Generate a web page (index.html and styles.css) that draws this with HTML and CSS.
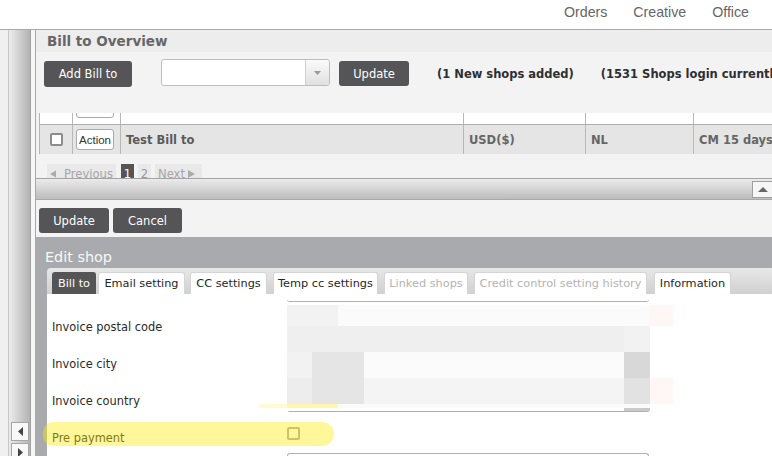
FILE: index.html
```html
<!DOCTYPE html>
<html>
<head>
<meta charset="utf-8">
<title>Bill to Overview</title>
<link rel="stylesheet" href="styles.css">
</head>
<body>
<header class="topbar">
  <nav class="topnav"><span>Orders</span><span>Creative</span><span>Office</span></nav>
</header>
<div class="layout">
  <aside class="rail">
    <div class="rail-edge"></div>
    <div class="rail-bar">
      <button class="rbtn"><svg width="5" height="9" viewBox="0 0 5 9"><polygon points="5,0 5,9 0,4.5" fill="#444"/></svg></button>
      <button class="rbtn"><svg width="5" height="9" viewBox="0 0 5 9"><polygon points="0,0 5,4.5 0,9" fill="#444"/></svg></button>
    </div>
    <div class="rail-gap"></div>
  </aside>
  <main class="panel">
    <div class="ov-title">Bill to Overview</div>
    <div class="toolbar">
      <button class="btn-dark btn-add">Add Bill to</button>
      <div class="select"><span class="select-arrow"><svg width="7" height="4" viewBox="0 0 7 4"><polygon points="0,0 7,0 3.5,4" fill="#9a9a9a"/></svg></span></div>
      <button class="btn-dark btn-upd">Update</button>
      <span class="stat">(1 New shops added)</span>
      <span class="stat stat2">(1531 Shops login currently)</span>
    </div>
    <div class="grid-clip">
      <div class="grid">
        <div class="row">
          <div class="cell c1 top1"><span class="chk"></span></div>
          <div class="cell c2 top2"><button class="action">Action</button></div>
          <div class="cell c3 top"></div>
          <div class="cell c4 top">USD($)</div>
          <div class="cell c5 top"></div>
          <div class="cell c6 top"></div>
        </div>
        <div class="row alt">
          <div class="cell c1"><span class="chk"></span></div>
          <div class="cell c2"><button class="action">Action</button></div>
          <div class="cell c3">Test Bill to</div>
          <div class="cell c4">USD($)</div>
          <div class="cell c5">NL</div>
          <div class="cell c6">CM 15 days</div>
        </div>
      </div>
    </div>
    <div class="pager">
      <span class="pg pg-prev"><svg width="7" height="8" viewBox="0 0 7 8"><polygon points="7,0 7,8 0,4" fill="#ababab"/></svg><span>Previous</span></span>
      <span class="pg cur">1</span>
      <span class="pg num">2</span>
      <span class="pg pg-next"><span>Next</span><svg width="7" height="8" viewBox="0 0 7 8"><polygon points="0,0 7,4 0,8" fill="#ababab"/></svg></span>
    </div>
    <div class="hbar"><button class="hbar-up"><svg width="10" height="5" viewBox="0 0 10 5"><polygon points="0,5 10,5 5,0" fill="#666"/></svg></button></div>
    <div class="actions">
      <button class="btn-dark btn-u2">Update</button>
      <button class="btn-dark btn-c2">Cancel</button>
    </div>
    <section class="edit">
      <h2 class="edit-title">Edit shop</h2>
      <div class="tabs">
        <span class="tab on t1">Bill to</span>
        <span class="tab t2">Email setting</span>
        <span class="tab t3">CC settings</span>
        <span class="tab t4">Temp cc settings</span>
        <span class="tab off t5">Linked shops</span>
        <span class="tab off t6">Credit control setting history</span>
        <span class="tab t7">Information</span>
      </div>
      <div class="form">
        <div class="labels">
          <div class="lbl">Invoice postal code</div>
          <div class="lbl">Invoice city</div>
          <div class="lbl">Invoice country</div>
          <div class="lbl">Pre payment</div>
        </div>
        <div class="fields">
          <div class="field-end"></div>
          <div class="mosaic">
            <i class="g0"></i><i class="g0"></i><i class="g0"></i><i class="g0"></i><i class="g0"></i>
            <i class="g2"></i><i class="g2"></i><i class="g1"></i><i class="g1"></i><i class="g1"></i>
            <i class="g3"></i><i class="g3"></i><i class="g3"></i><i class="g3"></i><i class="g2"></i>
            <i class="g2"></i><i class="g4"></i><i class="g4"></i><i class="g1"></i><i class="g5"></i>
            <i class="g6"></i><i class="g4"></i><i class="g4"></i><i class="g7"></i><i class="g8"></i>
            <i class="gy"></i><i class="gy"></i><i class="g1"></i><i class="g1"></i><i class="g1"></i>
            <i class="g0"></i><i class="g0"></i><i class="g0"></i><i class="g0"></i><i class="g9"></i>
          </div>
          <div class="chk chk-pre"></div>
          <div class="field-start"></div>
        </div>
        <div class="tint">
          <i class="p0"></i><i class="p1"></i><i class="p0"></i><i class="p1"></i>
        </div>
      </div>
      <div class="hl-streak"></div>
      <div class="hl"></div>
    </section>
  </main>
</div>
</body>
</html>
```
FILE: styles.css
```css
* { box-sizing: border-box; }
html, body { margin: 0; padding: 0; }
body {
  width: 772px;
  height: 456px;
  overflow: hidden;
  background: #fff;
  font-family: "DejaVu Sans", Verdana, sans-serif;
  font-size: 11.5px;
  color: #333;
}
button { font-family: inherit; margin: 0; cursor: default; }

/* top bar */
.topbar {
  height: 30px;
  border-bottom: 1px solid #a9a9a9;
  display: flex;
  justify-content: flex-end;
  padding: 4px 23px 0 0;
}
.topnav {
  display: flex;
  gap: 26px;
  font-family: "Liberation Sans", Arial, sans-serif;
  font-size: 14.2px;
  line-height: 16px;
  color: #666;
}

.layout { display: flex; height: 426px; overflow: hidden; }

/* left rail */
.rail { display: flex; flex: none; }
.rail-edge { width: 9px; background: #f0f0f0; border-right: 1px solid #c6c6c6; }
.rail-bar {
  width: 22px;
  background: linear-gradient(to right, #ececec, #b3b3b3);
  border-right: 1px solid #a0a0a0;
  display: flex;
  flex-direction: column;
  gap: 2px;
  padding: 392px 0 0 2px;
}
.rbtn {
  width: 18px;
  height: 19px;
  flex: none;
  padding: 0;
  background: #f8f8f8;
  border: 1px solid #a6a6a6;
  display: flex;
  align-items: center;
  justify-content: center;
}
.rail-gap { width: 4px; background: #f7f7f7; }

/* main panel */
.panel {
  flex: 1;
  min-width: 0;
  border-left: 1px solid #a8a8a8;
  background: #f3f3f3;
  display: flex;
  flex-direction: column;
  overflow: hidden;
}
.ov-title {
  height: 22px;
  line-height: 22px;
  flex: none;
  background: #ededed;
  padding-left: 11px;
  font-weight: bold;
  font-size: 13.5px;
  color: #666;
}
.toolbar {
  height: 61px;
  flex: none;
  display: flex;
  align-items: flex-start;
  padding: 9px 0 0 8px;
  white-space: nowrap;
}
.toolbar > * { flex: none; }
.btn-dark {
  height: 26px;
  padding: 0;
  background: #555557;
  color: #fff;
  border: 0;
  border-radius: 3px;
  font-size: 11.5px;
}
.btn-add { width: 88px; }
.select {
  width: 169px;
  height: 27px;
  margin: -2px 0 0 29px;
  background: #fff;
  border: 1px solid #bdbdbd;
  border-radius: 3px;
  display: flex;
  justify-content: flex-end;
  overflow: hidden;
}
.select-arrow {
  width: 24px;
  border-left: 1px solid #cfcfcf;
  background: linear-gradient(#fbfbfb, #e0e0e0);
  display: flex;
  align-items: center;
  justify-content: center;
}
.btn-upd { width: 70px; height: 25px; margin-left: 9px; }
.stat { margin-left: 28px; line-height: 26px; font-weight: bold; color: #2e2e33; }
.stat2 { margin-left: 27px; }

/* grid */
.grid-clip {
  height: 41px;
  flex: none;
  overflow: hidden;
  margin-left: 3px;
  border-left: 1px solid #b3b3b3;
}
.grid { margin-top: -18px; }
.row { display: flex; height: 30px; background: #fff; border-bottom: 1px solid #adadad; }
.row.alt { height: 29px; border-bottom: 0; background: #e5e5e5; }
.cell {
  flex: none;
  border-right: 1px solid #b8b8b8;
  display: flex;
  align-items: center;
  padding-left: 5px;
  font-weight: bold;
  color: #5a5a5a;
  white-space: nowrap;
}
.cell.top { align-items: flex-start; padding-top: 2px; }
.c1 { width: 33px; padding: 0; justify-content: center; }
.c2 { width: 48px; padding: 0 0 0 3px; justify-content: flex-start; }
.cell.top1 { align-items: flex-start; padding-top: 5px; }
.cell.top2 { align-items: flex-start; padding-top: 2px; }
.c3 { width: 343px; }
.c4 { width: 122px; color: #666; }
.c5 { width: 108px; color: #666; }
.c6 { flex: 1; border-right: 0; color: #666; }
.chk {
  display: block;
  width: 13px;
  height: 13px;
  border: 2px solid #8c8c8c;
  border-radius: 2px;
  background: #fff;
}
.action {
  height: 21px;
  width: 38px;
  padding: 0;
  background: #fff;
  border: 1px solid #a9a9a9;
  border-radius: 3px;
  font-family: "Liberation Sans", Arial, sans-serif;
  font-size: 11.5px;
  color: #333;
}

/* pager */
.pager {
  height: 24px;
  flex: none;
  overflow: hidden;
  display: flex;
  align-items: flex-start;
  gap: 4px;
  padding: 10px 0 0 11px;
}
.pg {
  height: 18px;
  line-height: 18px;
  padding: 1px 3px 0;
  background: #e9e9e9;
  color: #a6a6a6;
  font-size: 11.6px;
  white-space: nowrap;
  display: flex;
  align-items: center;
}
.pg-prev { width: 69px; gap: 8px; margin-right: 1px; }
.pg-next { width: 47px; gap: 3px; }
.pg.cur { width: 13px; justify-content: center; background: #555; color: #fff; }
.pg.num { width: 13px; justify-content: center; color: #999; }

/* horizontal bar */
.hbar {
  height: 22px;
  flex: none;
  border-top: 1px solid #a3a3a3;
  border-bottom: 1px solid #a9a9a9;
  background: linear-gradient(#ebebeb, #bcbcbc);
  display: flex;
  justify-content: flex-end;
  padding-top: 2px;
}
.hbar-up {
  width: 20px;
  height: 17px;
  padding: 0;
  background: #f6f6f6;
  border: 1px solid #9f9f9f;
  border-right: 0;
  display: flex;
  align-items: center;
  justify-content: center;
}

.actions {
  height: 37px;
  flex: none;
  display: flex;
  gap: 4px;
  padding: 8px 0 0 3px;
}
.btn-u2 { width: 70px; height: 25px; }
.btn-c2 { width: 69px; height: 25px; }

/* edit shop */
.edit {
  flex: 1;
  position: relative;
  background: #a9aaad;
  display: flex;
  flex-direction: column;
  min-height: 0;
}
.edit-title {
  margin: 0;
  height: 31px;
  flex: none;
  padding: 9px 0 0 9px;
  line-height: 22px;
  font-size: 14.4px;
  font-weight: normal;
  color: #f8f8f8;
}
.tabs {
  height: 26px;
  flex: none;
  margin-left: 11px;
  background: linear-gradient(#e8e8e8, #d0d0d0);
  border-top-left-radius: 4px;
  display: flex;
  align-items: flex-end;
  gap: 6px;
  padding-left: 5px;
  white-space: nowrap;
}
.tab {
  height: 22px;
  line-height: 21px;
  padding: 0;
  text-align: center;
  flex: none;
  background: #fff;
  border: 1px solid #d4d4d4;
  border-bottom: 0;
  border-radius: 3px 3px 0 0;
  font-size: 11.3px;
  color: #262626;
}
.tab.on { background: #555; border-color: #555; color: #fff; }
.tab.off { color: #b3b3b3; }
.t1 { width: 44px; margin-right: -4px; }
.t2 { width: 87px; margin-right: -1px; }
.t3 { width: 77px; }
.t4 { width: 105px; }
.t5 { width: 84px; }
.t6 { width: 173px; margin-right: 1px; }
.t7 { width: 77px; }

.form {
  flex: 1;
  margin-left: 11px;
  background: #fff;
  display: flex;
  overflow: hidden;
}
.labels { width: 240px; flex: none; padding: 15px 0 0 5px; }
.lbl { height: 37px; line-height: 37px; font-size: 11.4px; color: #2a2a2a; white-space: nowrap; }
.fields { width: 363px; flex: none; }
.field-end {
  width: 362px;
  height: 8px;
  border-bottom: 1px solid #b0b0b0;
  border-radius: 0 0 3px 3px;
}
.mosaic {
  width: 363px;
  display: grid;
  grid-template-columns: 25px 26px 26px 260px 26px;
  grid-template-rows: 3px 21px 26px 26px 26px 4px 3px;
  border-bottom: 1px solid #b0b0b0;
  border-radius: 0 0 3px 3px;
}
.mosaic i { display: block; }
.g0 { background: #fff; }
.g1 { background: #fbfbfb; }
.g2 { background: #f2f2f2; }
.g3 { background: #efefef; }
.g4 { background: #e5e5e5; }
.g5 { background: #d8d8d8; }
.g6 { background: #ededed; }
.g7 { background: #f4f4f4; }
.g8 { background: #e2e2e2; }
.g9 { background: #c9c9c9; }
.gy { background: #fffad2; }
.tint {
  width: 23px;
  flex: none;
  display: grid;
  grid-template-rows: 11px 21px 52px 26px;
}
.tint i { display: block; }
.p0 { background: #fff; }
.p1 { background: #fff6f6; }
.chk-pre { margin-top: 15px; border-color: #a8a8a8; }
.field-start {
  width: 362px;
  height: 10px;
  margin-top: 13px;
  border: 1px solid #b0b0b0;
  border-bottom: 0;
  border-radius: 3px 3px 0 0;
}

/* highlighter marks drawn over the form */
.hl {
  position: absolute;
  left: 7px;
  top: 185px;
  width: 291px;
  height: 24px;
  border-radius: 12px 14px 14px 12px;
  background: rgba(255, 235, 0, 0.4);
}
.hl-streak {
  position: absolute;
  left: 223px;
  top: 167px;
  width: 79px;
  height: 4px;
  background: rgba(255, 238, 60, 0.25);
}
```
